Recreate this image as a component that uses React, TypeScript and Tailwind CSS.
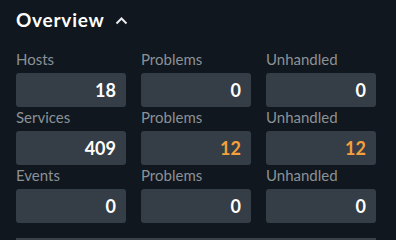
const rows = [
  [
    { label: "Hosts", value: "18" },
    { label: "Problems", value: "0" },
    { label: "Unhandled", value: "0" },
  ],
  [
    { label: "Services", value: "409" },
    { label: "Problems", value: "12", warn: true },
    { label: "Unhandled", value: "12", warn: true },
  ],
  [
    { label: "Events", value: "0" },
    { label: "Problems", value: "0" },
    { label: "Unhandled", value: "0" },
  ],
];

export default function App() {
  return (
    <div
      className="h-[240px] w-[396px] overflow-hidden bg-[#10171e] pl-4 pr-5 pt-[8px]"
      style={{ fontFamily: "Lato, 'Open Sans', sans-serif" }}
    >
      <div className="flex h-[24px] items-center gap-[10px]">
        <h2 className="text-[19px] font-bold leading-[24px] tracking-[0.04em] text-white">Overview</h2>
        <svg width="13" height="9" viewBox="0 0 13 9" className="mt-[1px]">
          <path d="M1.5 7.5 L6.5 2.5 L11.5 7.5" fill="none" stroke="#e8eaec" strokeWidth="2" />
        </svg>
      </div>
      <div className="mt-[17px] flex flex-col">
        {rows.map((row, i) => (
          <div key={i} className="grid grid-cols-3 gap-[15px]">
            {row.map((c, j) => (
              <div key={j}>
                <div className="mb-[4px] text-[15px] leading-[20px] text-[#8c9196]">{c.label}</div>
                <div className="flex h-[34px] items-center justify-end rounded-[3px] bg-[#353d46] pr-[10px]">
                  <span
                    className={
                      "text-[18px] font-bold " + (c.warn ? "text-[#f5a03a]" : "text-white")
                    }
                  >
                    {c.value}
                  </span>
                </div>
              </div>
            ))}
          </div>
        ))}
      </div>
      <div className="mt-[15px] h-[3px] bg-[#3b4148]" />
    </div>
  );
}
